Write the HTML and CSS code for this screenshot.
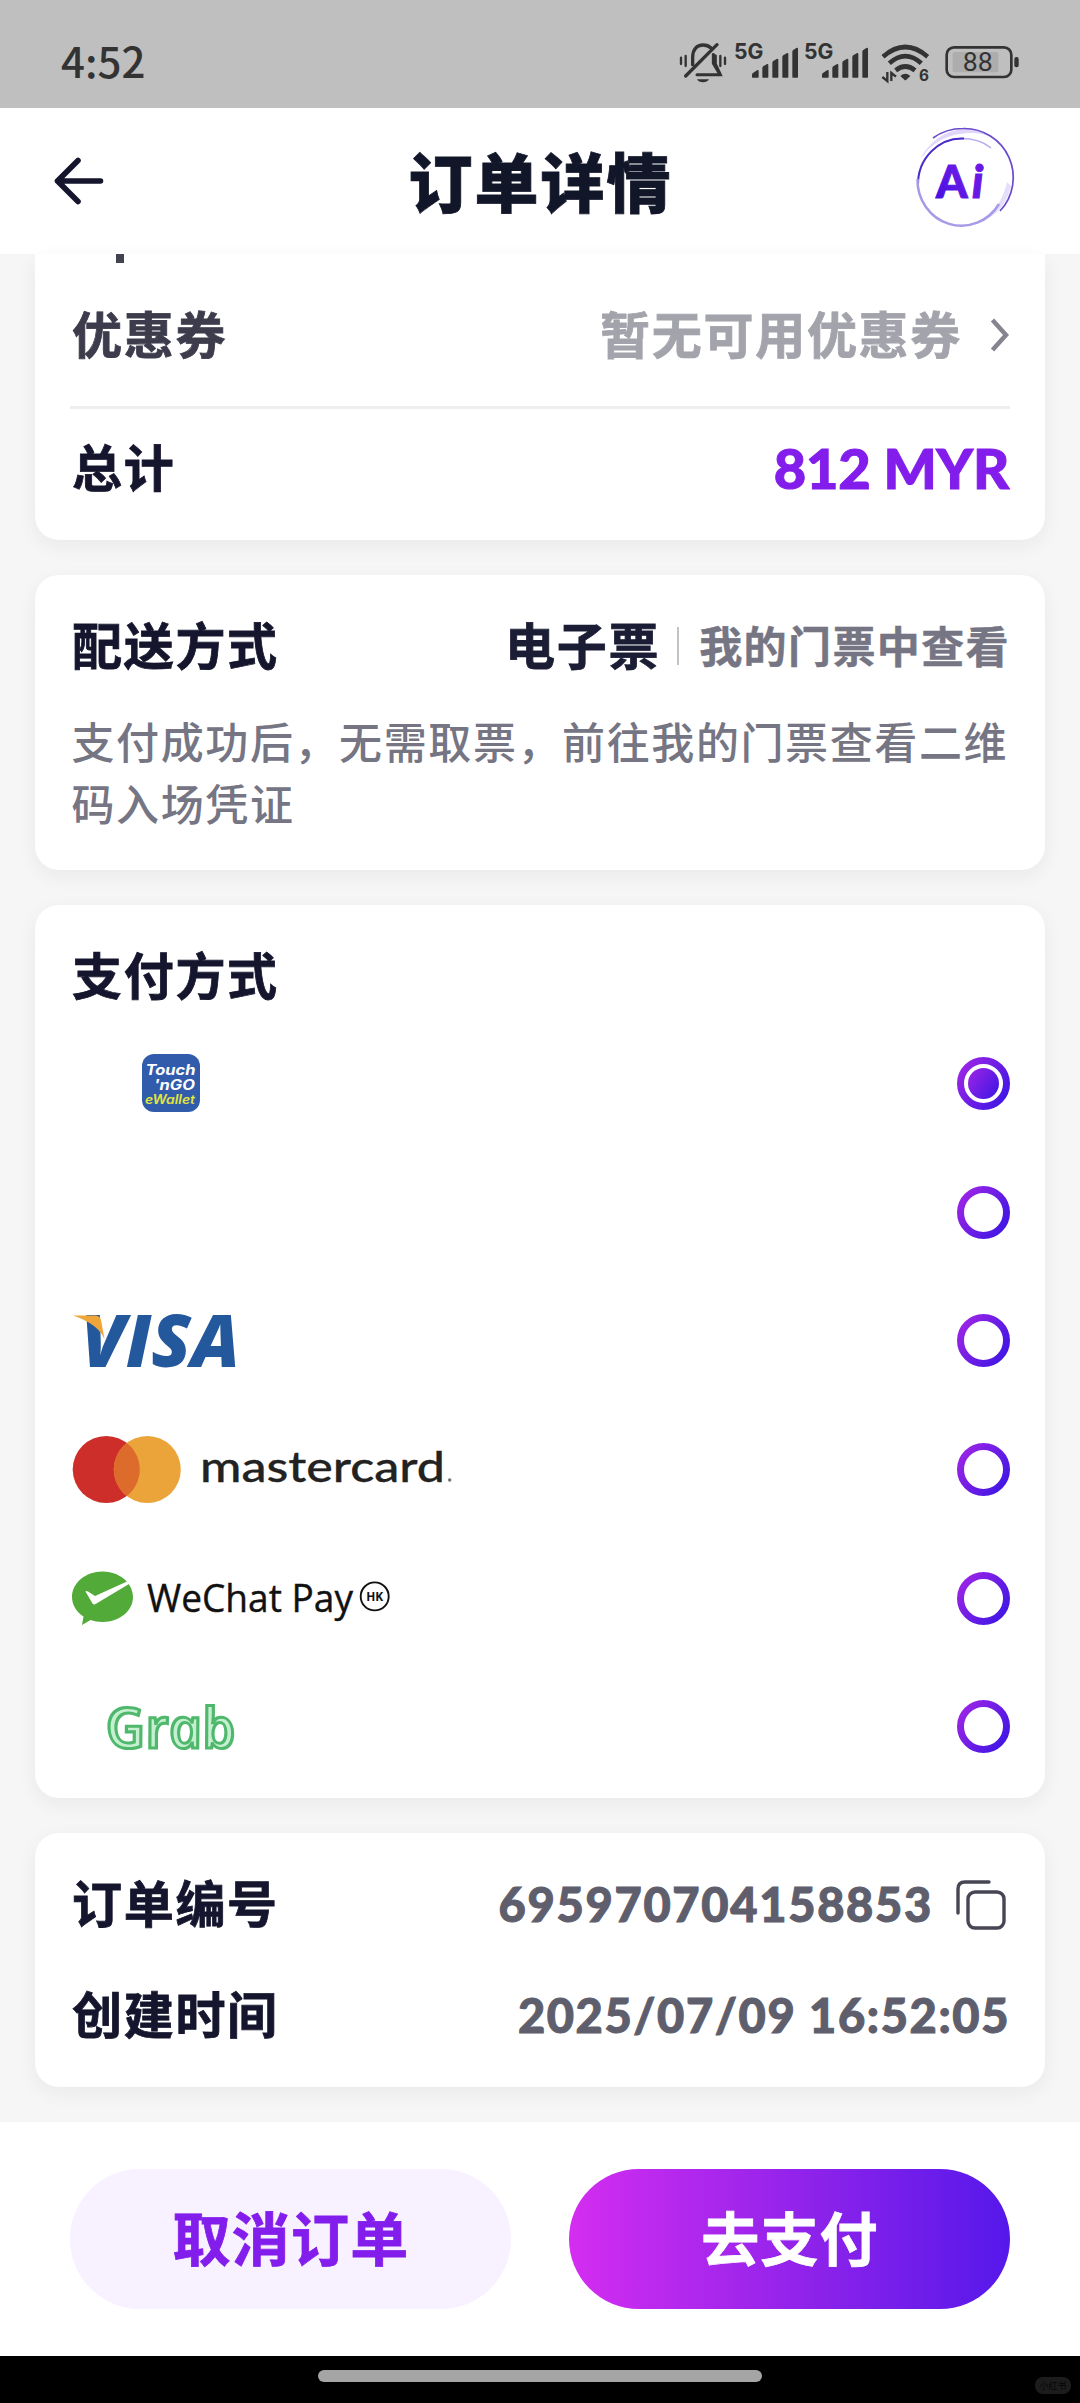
FILE: index.html
```html
<!DOCTYPE html>
<html lang="zh-CN">
<head>
<meta charset="utf-8">
<meta name="viewport" content="width=device-width">
<title>订单详情</title>
<link rel="stylesheet" href="styles.css">
</head>
<body>
<svg class="defs" width="0" height="0" aria-hidden="true">
  <defs>
    <linearGradient id="violet" x1="0" y1="0.15" x2="1" y2="0.85"><stop offset="0" stop-color="#9a24e6"/><stop offset="1" stop-color="#4016e4"/></linearGradient>
    <linearGradient id="ai" x1="0" y1="1" x2="1" y2="0"><stop offset="0" stop-color="#3d0fe0"/><stop offset="1" stop-color="#7c1ee8"/></linearGradient>
    <g id="bars" fill="#333"><path d="M273 171v-7q0-4 4-6l11-7q5-2 5 2v18q0 2-2 2h-16q-2 0-2-2z"/><path d="M304 171v-27q0-4 4-6l9-5q5-2 5 2v36q0 2-2 2h-14q-2 0-2-2z"/><path d="M334 171v-43q0-4 4-6l9-5q5-2 5 2v52q0 2-2 2h-14q-2 0-2-2z"/><path d="M364 171v-60q0-4 4-6l9-5q5-2 5 2v69q0 2-2 2h-14q-2 0-2-2z"/><path d="M394 171v-76q0-4 4-6l8-5q5-2 5 2v85q0 2-2 2h-13q-2 0-2-2z"/></g>
    <g id="ring"><circle cx="26.5" cy="26.5" r="23" fill="none" stroke="url(#violet)" stroke-width="7"/></g>
  </defs>
</svg>

<div class="status">
  <span class="time">4:52</span>
  <div class="status-icons">
    <svg width="48" height="42" viewBox="54 66 144 126" fill="none" stroke="#333" stroke-linecap="round">
      <path d="M95 134V112C95 88 108 75 126 75C137 75 144 78 150 84" stroke-width="10"/>
      <path d="M74 168L168 74" stroke-width="10"/>
      <path d="M157 104L163 108V132L178 164H108" stroke-width="9"/>
      <path d="M157 104V130L176 162" stroke-width="9"/>
      <path d="M108 178H144C139 190 113 190 108 178Z" fill="#333" stroke="none"/>
      <path d="M60 113V132M74 108V138M178 108V138M192 113V132" stroke-width="7"/>
    </svg>
    <svg class="signal" width="64" height="42" viewBox="222 66 192 126"><text x="219" y="118" textLength="88" lengthAdjust="spacingAndGlyphs" class="net">5G</text><use href="#bars"/></svg>
    <svg class="signal" width="64" height="42" viewBox="222 66 192 126"><text x="219" y="118" textLength="88" lengthAdjust="spacingAndGlyphs" class="net">5G</text><use href="#bars"/></svg>
    <svg class="wifi" width="49" height="42" viewBox="663 66 147 126" fill="none" stroke="#333" stroke-width="14">
      <path d="M669 110Q736 52 803 110"/><path d="M688 130Q736 87 784 130"/><path d="M707 151Q736 128 765 151"/>
      <path d="M721 168Q736 154 751 168L739 179Q736 182 733 179Z" fill="#333" stroke="none"/>
      <path d="M682 156V183L667 171M694 183V159L708 170" stroke-width="7"/>
      <text x="777" y="184" class="wifi-gen" stroke="none">6</text>
    </svg>
    <svg class="battery" width="75" height="42" viewBox="854 66 225 126">
      <rect x="877" y="96" width="137" height="61" rx="6" fill="#adadad"/>
      <rect x="859" y="82" width="194" height="89" rx="22" fill="none" stroke="#333" stroke-width="8"/>
      <rect x="1062" y="111" width="13" height="31" rx="6" fill="#333"/>
      <text x="907" y="154" textLength="90" lengthAdjust="spacingAndGlyphs" class="charge">88</text>
    </svg>
  </div>
</div>

<header class="header">
  <svg class="back" width="50" height="50" viewBox="0 0 50 50" fill="none" stroke="#15152d" stroke-width="5.6" stroke-linecap="round" stroke-linejoin="round"><path d="M24 4.500L3.500 25L24 45.500M3.500 25H46.500"/></svg>
  <h1>订单详情</h1>
  <svg class="ai" width="104" height="104" viewBox="914 124 104 104">
    <path d="M922 157C936 130 968 120 990 135C974 129 941 131 925 154Z" fill="#c9b6fa" opacity=".55"/>
    <path d="M1012 185C1007 205 996 217 976 223C994 213 1003 202 1008 181Z" fill="#d5cafa" opacity=".6"/>
    <path d="M919 181A44 44 0 0 1 962 137.500C976 137.500 985 141 992 147" fill="none" stroke="#b9abef" stroke-width="1.500"/>
    <path d="M919 184A44 46 0 0 1 965 137.500" fill="none" stroke="#4c2cc8" stroke-width="2"/>
    <path d="M934 137Q947 127.500 964 127.500A49 49 0 0 1 1001 210" fill="none" stroke="#6a4bcb" stroke-width="1.700"/>
    <path d="M918.500 178A44 45.500 0 0 0 1000 203" fill="none" stroke="#a79ae8" stroke-width="2.500"/>
    <text x="937" y="197" class="ai-text" fill="url(#ai)" stroke="url(#ai)">A</text>
    <text x="973" y="197" class="ai-text ai-i" fill="#6a17e6" stroke="#6a17e6">i</text>
  </svg>
</header>

<main>
  <section class="card summary">
    <i class="scrolled"></i>
    <div class="row coupon"><b class="soft">优惠券</b><span class="end"><b class="muted">暂无可用优惠券</b><svg class="chevron" width="20" height="34" viewBox="0 0 20 34" fill="none" stroke="#858590" stroke-width="4.500"><path d="M2.500 2L16 17L2.500 32"/></svg></span></div>
    <div class="row total"><b>总计</b><strong class="price">812 MYR</strong></div>
  </section>

  <section class="card delivery">
    <div class="row"><b>配送方式</b><span class="end"><b class="kind">电子票</b><i class="bar"></i><span class="where">我的门票中查看</span></span></div>
    <p>支付成功后，无需取票，前往我的门票查看二维码入场凭证</p>
  </section>

  <section class="card payment">
    <h2>支付方式</h2>
    <div class="pay">
      <svg class="logo" width="180" height="60" viewBox="70 1053.500 180 60">
        <rect x="142" y="1054.500" width="58" height="58" rx="12" fill="#315bab"/>
        <g class="tng"><text x="145.500" y="1075.500" textLength="50" lengthAdjust="spacingAndGlyphs" fill="#fff">Touch</text><text x="154" y="1090" textLength="41" lengthAdjust="spacingAndGlyphs" fill="#fff">'nGO</text><text x="145" y="1104.500" class="ew" textLength="50" lengthAdjust="spacingAndGlyphs" fill="#e4e53c">eWallet</text></g>
      </svg>
      <svg width="53" height="53"><use href="#ring"/><circle cx="26.500" cy="26.500" r="15.500" fill="url(#violet)"/></svg>
    </div>
    <div class="pay"><span class="logo"></span><svg width="53" height="53"><use href="#ring"/></svg></div>
    <div class="pay">
      <svg class="logo" width="180" height="60" viewBox="70 1311 180 60">
        <text x="81" y="1366.500" class="visa" textLength="159" lengthAdjust="spacingAndGlyphs">VISA</text>
        <path d="M73 1315.500H95Q100 1315.500 101 1320L104.500 1339Q98 1324 73 1315.500Z" fill="#eea63b"/>
      </svg>
      <svg width="53" height="53"><use href="#ring"/></svg>
    </div>
    <div class="pay">
      <svg class="logo" width="400" height="70" viewBox="70 1434 400 70">
        <circle cx="106.200" cy="1469.500" r="33.500" fill="#ce2e29"/><circle cx="147.300" cy="1469.500" r="33.500" fill="#eaa43a"/>
        <path d="M126.750 1443A33.500 33.500 0 0 1 126.750 1496A33.500 33.500 0 0 1 126.750 1443Z" fill="#dd6b2c"/>
        <text x="200" y="1481.500" class="mc" textLength="245" lengthAdjust="spacingAndGlyphs">mastercard</text><circle cx="449.700" cy="1480" r="1.800" fill="#777"/>
      </svg>
      <svg width="53" height="53"><use href="#ring"/></svg>
    </div>
    <div class="pay">
      <svg class="logo" width="340" height="60" viewBox="70 1568 340 60">
        <path d="M102.500 1571.500C119.500 1571.500 133 1583 133 1597C133 1611 119.500 1622 102.500 1622C98 1622 94 1621 90.500 1620L82 1625L83.500 1616.500C76.500 1612 72 1605 72 1597C72 1583 85.500 1571.500 102.500 1571.500Z" fill="#52ab38"/>
        <path d="M85.500 1591.500Q86 1590.300 88 1591.500L95 1596L127 1581.500L129 1584L96 1603.800Q94 1605.500 92.500 1603.500Z" fill="#fff"/>
        <text x="147" y="1611.500" class="wx" textLength="206" lengthAdjust="spacingAndGlyphs">WeChat Pay</text>
        <circle cx="374.700" cy="1596.400" r="14" fill="none" stroke="#111" stroke-width="1.900"/><text x="366.200" y="1601.300" class="hk" textLength="17" lengthAdjust="spacingAndGlyphs">HK</text>
      </svg>
      <svg width="53" height="53"><use href="#ring"/></svg>
    </div>
    <div class="pay">
      <svg class="logo" width="180" height="60" viewBox="70 1697 180 60">
        <text class="grab" transform="translate(109 1747.500) skewX(12)" textLength="130" lengthAdjust="spacingAndGlyphs">Grab</text>
      </svg>
      <svg width="53" height="53"><use href="#ring"/></svg>
    </div>
  </section>

  <section class="card order">
    <div class="row"><b>订单编号</b><span class="end"><span class="num">695970704158853</span><svg class="copy" width="50" height="50" viewBox="0 0 50 50" fill="none" stroke="#464655" stroke-width="3.400" stroke-linecap="round"><path d="M2 33V9Q2 2 9 2H33"/><rect x="12" y="12" width="36" height="36" rx="7"/></svg></span></div>
    <div class="row"><b>创建时间</b><span class="num date">2025/07/09 16:52:05</span></div>
  </section>
</main>

<footer class="actions">
  <button class="cancel">取消订单</button>
  <button class="go">去支付</button>
</footer>
<div class="nav"><i class="pill"></i><span class="mark">小红书</span></div>
</body>
</html>
```
FILE: styles.css
```css
* { box-sizing: border-box; }
body {
  margin: 0; width: 1080px; height: 2403px; overflow: hidden;
  display: flex; flex-direction: column;
  background: #f6f6f6; color: #15162e;
  font-family: "Noto Sans CJK SC", sans-serif;
}
svg { display: block; flex: none; overflow: visible; }
.defs { position: absolute; }
h1, h2, p { margin: 0; }

.status { height: 108px; background: #bfbfbf; color: #333; display: flex; justify-content: space-between; padding: 42px 60px 0 61px; }
.time { font: 500 42px/42px "Noto Sans CJK SC", sans-serif; margin-top: -3px; }
.status-icons { display: flex; }
.signal { margin-left: 8px; }
.signal + .signal { margin-left: 6px; }
.wifi { margin-left: 12px; }
.battery { margin-left: 15px; }
.net { font: 700 64px Inter, sans-serif; fill: #333; }
.wifi-gen { font: 700 46px Inter, sans-serif; fill: #333; }
.charge { font: 400 76px Roboto, sans-serif; fill: #333; }

.header { height: 146px; background: #fff; display: flex; align-items: center; justify-content: space-between; padding: 0 63px 0 54px; }
h1 { font-size: 64px; font-weight: 900; line-height: 80px; letter-spacing: 2px; color: #121629; padding: 0 0 5px 64px; -webkit-text-stroke: .8px #121629; }
.ai { margin-bottom: 8px; }
.ai-text { font: 900 45px Lato, sans-serif; stroke-width: 1; }
.ai-i { font-style: italic; }

main { flex: 1; padding: 0 35px; display: flex; flex-direction: column; gap: 35px; }
.card { background: #fff; border-radius: 24px; padding: 0 35px; box-shadow: 0 6px 20px rgba(30, 40, 60, .06); }
.row { display: flex; align-items: center; justify-content: space-between; font-size: 50px; line-height: 70px; letter-spacing: 1.700px; }
.row b { padding: 0 0 6px 2px; }
.row b, h2 { -webkit-text-stroke: .8px currentColor; }
.end { display: flex; align-items: center; }

.summary { height: 286px; border-radius: 0 0 24px 24px; }
.scrolled { display: block; width: 8px; height: 9px; margin-left: 46px; background: #43424f; }
.coupon { height: 146px; border-bottom: 3px solid #eee; }
.soft { color: #3d3c4c; }
.muted { color: #a3a3ac; }
.chevron { margin-left: 28px; }
.total { height: 118px; }
.price { color: #831deb; font: 900 56px/70px Lato, sans-serif; letter-spacing: -.3px; -webkit-text-stroke: 1px #831deb; margin-right: 1px; }

.delivery { height: 295px; padding-top: 5px; }
.delivery .row { height: 132px; }
.kind { color: #1b1d35; }
.bar { width: 2px; height: 38px; background: #c2c2c7; margin: 0 20px 0 17px; }
.where { font-size: 43px; font-weight: 700; letter-spacing: 1.400px; color: #757583; padding-bottom: 4px; -webkit-text-stroke: .5px #757583; }
.delivery p { font-size: 43px; font-weight: 500; line-height: 61.500px; letter-spacing: 1.600px; color: #757583; padding-left: 1.500px; margin: -2px -10px 0 0; }

.payment { height: 893px; }
h2 { font-size: 50px; line-height: 70px; letter-spacing: 1.700px; height: 114px; padding: 33px 0 0 2px; }
.pay { height: 128.700px; display: flex; align-items: center; justify-content: space-between; }
.tng { font: italic 700 14px Inter, sans-serif; }
.tng .ew { font-size: 12.500px; font-weight: 600; }
.visa { font: italic 800 72px "Open Sans", sans-serif; fill: #24589d; }
.mc { font: 500 43px Lato, sans-serif; fill: #222; stroke: #222; stroke-width: .3; }
.wx { font: 400 39px "Open Sans", sans-serif; fill: #111; stroke: #111; stroke-width: .4; }
.hk { font: 700 13px "Open Sans", sans-serif; fill: #111; }
.grab { font: italic 600 56px "Open Sans", sans-serif; fill: #c5f0d0; stroke: #4fb86d; stroke-width: 3; }

.order { height: 254px; padding-top: 15px; }
.order .row { height: 111.500px; }
.num { color: #5e5e6c; font: 900 47px/70px Lato, sans-serif; letter-spacing: 1.700px; -webkit-text-stroke: 1px #5e5e6c; }
.date { letter-spacing: 1.600px; }
.copy { margin: 2px 4px 0 23px; }

.actions { height: 234px; background: #fff; display: flex; justify-content: space-between; padding: 47px 70px; }
button { border: 0; width: 441px; height: 140px; border-radius: 70px; font: 700 58px/80px "Noto Sans CJK SC", sans-serif; letter-spacing: 1.200px; padding: 0 0 6px 1px; -webkit-text-stroke: .8px currentColor; }
.cancel { background: #f8f1ff; color: #831deb; }
.go { color: #fff; background: linear-gradient(90deg, #d42df0, #8a22ea 58%, #5518ea); }

.nav { height: 47px; background: #000; position: relative; }
.pill { display: block; width: 444px; height: 12px; border-radius: 6px; background: #a5a5a5; margin: 14px auto 0; }
.mark { position: absolute; right: 9px; top: 21px; width: 36px; height: 17px; border-radius: 8px; background: #1c1c1c; color: #050505; font-size: 9px; line-height: 17px; text-align: center; }
```
